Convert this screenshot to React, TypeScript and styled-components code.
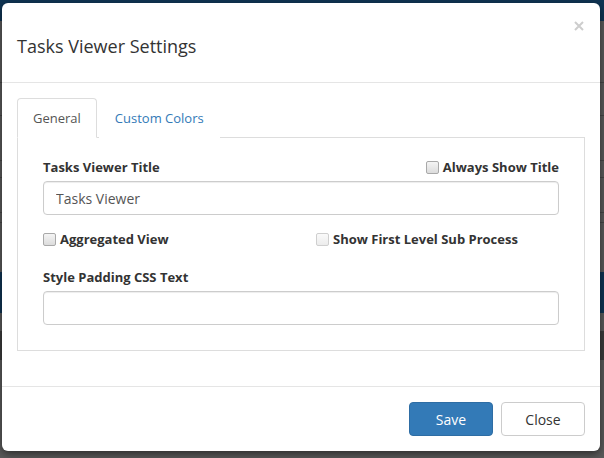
import React from 'react';
import styled, { createGlobalStyle } from 'styled-components';

const GlobalStyle = createGlobalStyle`
  html, body {
    margin: 0;
    padding: 0;
  }
  body {
    font-family: 'Open Sans', 'Liberation Sans', sans-serif;
    font-size: 13px;
    color: #333;
    background:
      linear-gradient(#454545, #454545) 0 82px / 100% 1px no-repeat,
      linear-gradient(#454545, #454545) 0 115px / 100% 1px no-repeat,
      linear-gradient(#454545, #454545) 0 160px / 100% 1px no-repeat,
      linear-gradient(#454545, #454545) 0 177px / 100% 1px no-repeat,
      linear-gradient(#454545, #454545) 0 212px / 100% 1px no-repeat,
      linear-gradient(#454545, #454545) 0 222px / 100% 1px no-repeat,
      linear-gradient(
        #0f3453 0, #0f3453 21px,
        #5a5a5a 21px, #5a5a5a 272px,
        #0f3453 272px, #0f3453 313px,
        #5a5a5a 313px, #5a5a5a 331px,
        #3b3b3b 331px, #3b3b3b 360px,
        #5a5a5a 360px
      );
    min-height: 458px;
  }
`;

const Backdrop = styled.div`
  padding: 3px 4px 0 2px;
  height: 458px;
  box-sizing: border-box;
`;

const Modal = styled.div`
  width: 598px;
  height: 448px;
  background: #fff;
  border-radius: 6px;
  box-shadow: 0 3px 9px rgba(0, 0, 0, 0.5);
  display: flex;
  flex-direction: column;
  box-sizing: border-box;
`;

const Header = styled.div`
  display: flex;
  justify-content: space-between;
  align-items: flex-start;
  height: 80px;
  box-sizing: border-box;
  padding: 30px 15px 0;
  border-bottom: 1px solid #e5e5e5;
`;

const Title = styled.h4`
  margin: 0;
  font-size: 18px;
  line-height: 26px;
  font-weight: 400;
  color: #333;
`;

const CloseX = styled.button`
  border: 0;
  background: none;
  padding: 0;
  margin: -14px 0 0 0;
  width: 13px;
  height: 13px;
  display: flex;
  align-items: center;
  justify-content: center;
  cursor: pointer;
`;

const Body = styled.div`
  padding: 15px 15px 0;
  height: 303px;
  box-sizing: border-box;
`;

const NavTabs = styled.ul`
  display: flex;
  margin: 0;
  padding: 0;
  list-style: none;
  border-bottom: 1px solid #ddd;
`;

const Tab = styled.li<{ $active?: boolean }>`
  margin: 0 2px -1px 0;
  padding: 9px 15px;
  line-height: 20px;
  font-size: 13px;
  border: 1px solid ${({ $active }) => ($active ? '#ddd' : 'transparent')};
  border-bottom-color: ${({ $active }) => ($active ? '#fff' : 'transparent')};
  border-radius: 4px 4px 0 0;
  background: #fff;
  color: ${({ $active }) => ($active ? '#555' : '#337ab7')};
  cursor: pointer;
`;

const Panel = styled.div`
  border: 1px solid #ddd;
  border-top: 0;
  padding: 18px 25px 25px;
`;

const LabelRow = styled.div`
  display: flex;
  justify-content: space-between;
  align-items: flex-end;
  height: 21px;
  margin-bottom: 4px;
`;

const Label = styled.label`
  font-weight: 700;
  font-size: 13px;
  line-height: 20px;
  color: #333;
`;

const CheckLabel = styled.label`
  display: flex;
  align-items: center;
  gap: 4px;
  font-weight: 700;
  font-size: 13px;
  line-height: 20px;
  color: #333;
`;

const Box = styled.span<{ $disabled?: boolean }>`
  width: 11px;
  height: 11px;
  border: 1px solid ${({ $disabled }) => ($disabled ? '#cfcfcf' : '#a9a9a9')};
  border-radius: 2px;
  background: ${({ $disabled }) =>
    $disabled
      ? 'linear-gradient(#fafafa, #ececec)'
      : 'linear-gradient(#f4f4f4, #dcdcdc)'};
  flex: none;
`;

const Input = styled.input`
  display: block;
  width: 100%;
  height: 34px;
  box-sizing: border-box;
  padding: 6px 12px;
  border: 1px solid #ccc;
  border-radius: 4px;
  font-family: 'Open Sans', 'Liberation Sans', sans-serif;
  font-size: 14px;
  color: #555;
  box-shadow: inset 0 1px 1px rgba(0, 0, 0, 0.075);
  outline: none;
`;

const CheckGrid = styled.div`
  display: grid;
  grid-template-columns: 1fr 1fr;
  column-gap: 30px;
  margin: 14px 0 17px;
`;

const Footer = styled.div`
  display: flex;
  justify-content: flex-end;
  gap: 8px;
  padding: 15px;
  border-top: 1px solid #e5e5e5;
`;

const Button = styled.button<{ $primary?: boolean }>`
  width: 84px;
  height: 34px;
  font-family: 'Open Sans', 'Liberation Sans', sans-serif;
  font-size: 14px;
  border-radius: 4px;
  border: 1px solid ${({ $primary }) => ($primary ? '#2e6da4' : '#ccc')};
  background: ${({ $primary }) => ($primary ? '#337ab7' : '#fff')};
  color: ${({ $primary }) => ($primary ? '#fff' : '#333')};
  cursor: pointer;
`;

const Checkbox: React.FC<{ label: string; disabled?: boolean }> = ({ label, disabled }) => (
  <CheckLabel>
    <Box $disabled={disabled} />
    {label}
  </CheckLabel>
);

const App: React.FC = () => (
  <>
    <GlobalStyle />
    <Backdrop>
      <Modal>
        <Header>
          <Title>Tasks Viewer Settings</Title>
          <CloseX aria-label="Close">
            <svg width="10" height="10" viewBox="0 0 10 10">
              <path d="M1 1L9 9M9 1L1 9" stroke="#cdcdcd" strokeWidth="2" />
            </svg>
          </CloseX>
        </Header>
        <Body>
          <NavTabs>
            <Tab $active>General</Tab>
            <Tab>Custom Colors</Tab>
          </NavTabs>
          <Panel>
            <LabelRow>
              <Label>Tasks Viewer Title</Label>
              <Checkbox label="Always Show Title" />
            </LabelRow>
            <Input defaultValue="Tasks Viewer" />
            <CheckGrid>
              <Checkbox label="Aggregated View" />
              <Checkbox label="Show First Level Sub Process" disabled />
            </CheckGrid>
            <LabelRow>
              <Label>Style Padding CSS Text</Label>
            </LabelRow>
            <Input />
          </Panel>
        </Body>
        <Footer>
          <Button $primary>Save</Button>
          <Button>Close</Button>
        </Footer>
      </Modal>
    </Backdrop>
  </>
);

export default App;
